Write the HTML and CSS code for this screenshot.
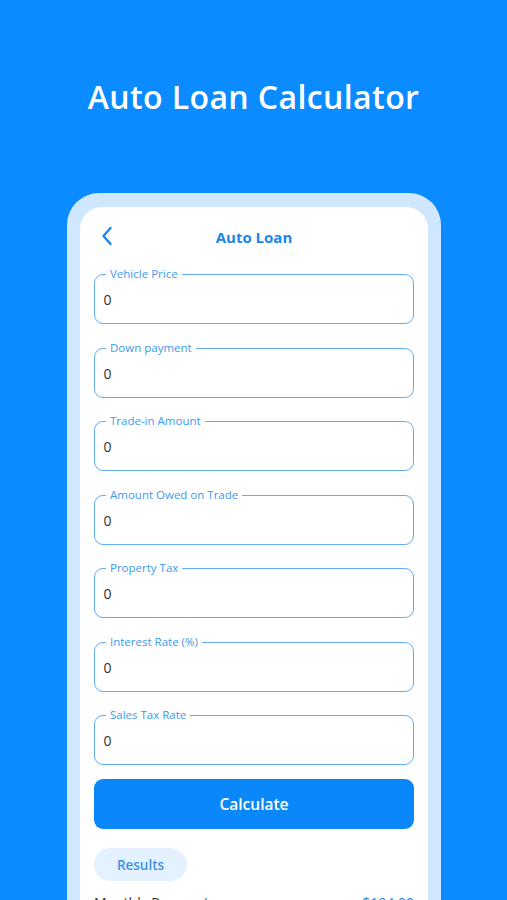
FILE: index.html
```html
<!DOCTYPE html>
<html lang="en">
<head>
<meta charset="utf-8">
<title>Auto Loan Calculator</title>
<link rel="stylesheet" href="styles.css">
</head>
<body>
<div class="page">
  <header class="hero">
    <h1 class="hero-title">Auto Loan Calculator</h1>
  </header>
  <div class="phone">
    <div class="screen">
      <div class="topbar">
        <svg class="back" width="12" height="20" viewBox="0 0 12 20" aria-hidden="true">
          <path d="M9.5 2 L2.5 10 L9.5 18" fill="none" stroke="#1a86ec" stroke-width="2.4" stroke-linecap="round" stroke-linejoin="round"/>
        </svg>
        <div class="topbar-title">Auto Loan</div>
      </div>
      <div class="fields">
        <div class="field"><span class="field-label">Vehicle Price</span><span class="field-value">0</span></div>
        <div class="field"><span class="field-label">Down payment</span><span class="field-value">0</span></div>
        <div class="field"><span class="field-label">Trade-in Amount</span><span class="field-value">0</span></div>
        <div class="field"><span class="field-label">Amount Owed on Trade</span><span class="field-value">0</span></div>
        <div class="field"><span class="field-label">Property Tax</span><span class="field-value">0</span></div>
        <div class="field"><span class="field-label">Interest Rate (%)</span><span class="field-value">0</span></div>
        <div class="field"><span class="field-label">Sales Tax Rate</span><span class="field-value">0</span></div>
      </div>
      <button class="calc-btn" type="button">Calculate</button>
      <div class="results-pill">Results</div>
      <div class="result-row">
        <span class="result-name">Monthly Payment</span>
        <span class="result-value">$194.00</span>
      </div>
    </div>
  </div>
</div>
</body>
</html>
```
FILE: styles.css
```css
html, body {
  margin: 0;
  padding: 0;
}
body {
  background: #0a8bff;
  font-family: "Open Sans", "Liberation Sans", sans-serif;
  height: 900px;
  overflow: hidden;
}
.page {
  width: 507px;
}
.hero {
  height: 193px;
  box-sizing: border-box;
  padding-top: 76px;
}
.hero-title {
  margin: 0;
  text-align: center;
  color: #ffffff;
  font-size: 32px;
  line-height: 42px;
  font-weight: 600;
  letter-spacing: 0.4px;
}
.phone {
  margin-left: 67px;
  width: 374px;
  box-sizing: border-box;
  background: #cfe7ff;
  border-radius: 32px 32px 0 0;
  padding: 14px 13px 0 13px;
  height: 760px;
}
.screen {
  background: #ffffff;
  border-radius: 22px 22px 0 0;
  height: 100%;
  padding: 0 14px;
  box-sizing: border-box;
}
.topbar {
  height: 58px;
  display: flex;
  align-items: center;
  justify-content: center;
  position: relative;
}
.back {
  position: absolute;
  left: 7px;
  top: 19px;
}
.topbar-title {
  color: #1a86ec;
  font-weight: 700;
  font-size: 15px;
  padding-top: 1px;
}
.fields {
  margin-top: 9px;
  display: flex;
  flex-direction: column;
  gap: 23.5px;
}
.field {
  position: relative;
  height: 50px;
  box-sizing: border-box;
  border: 1.5px solid #62adf4;
  border-radius: 9px;
  display: flex;
  align-items: center;
  padding-left: 8.5px;
}
.field-label {
  position: absolute;
  top: -9px;
  left: 11px;
  padding: 0 4px;
  background: #ffffff;
  color: #3d9af0;
  font-size: 11.5px;
  line-height: 15px;
}
.field-value {
  color: #333333;
  font-size: 14px;
  font-weight: 500;
  padding-top: 1px;
}
.calc-btn {
  display: block;
  width: 100%;
  margin-top: 14px;
  height: 50px;
  border: none;
  border-radius: 9px;
  background: #0a88fa;
  color: #ffffff;
  font-family: inherit;
  font-size: 15.5px;
  font-weight: 600;
}
.results-pill {
  margin-top: 19px;
  width: 93px;
  height: 33px;
  border-radius: 17px;
  background: #e4f2ff;
  color: #3a94ec;
  font-size: 13.5px;
  font-weight: 600;
  display: flex;
  align-items: center;
  justify-content: center;
}
.result-row {
  margin-top: 12px;
  display: flex;
  justify-content: space-between;
  font-size: 14px;
}
.result-name {
  color: #333333;
}
.result-value {
  color: #1a86ec;
}
```
